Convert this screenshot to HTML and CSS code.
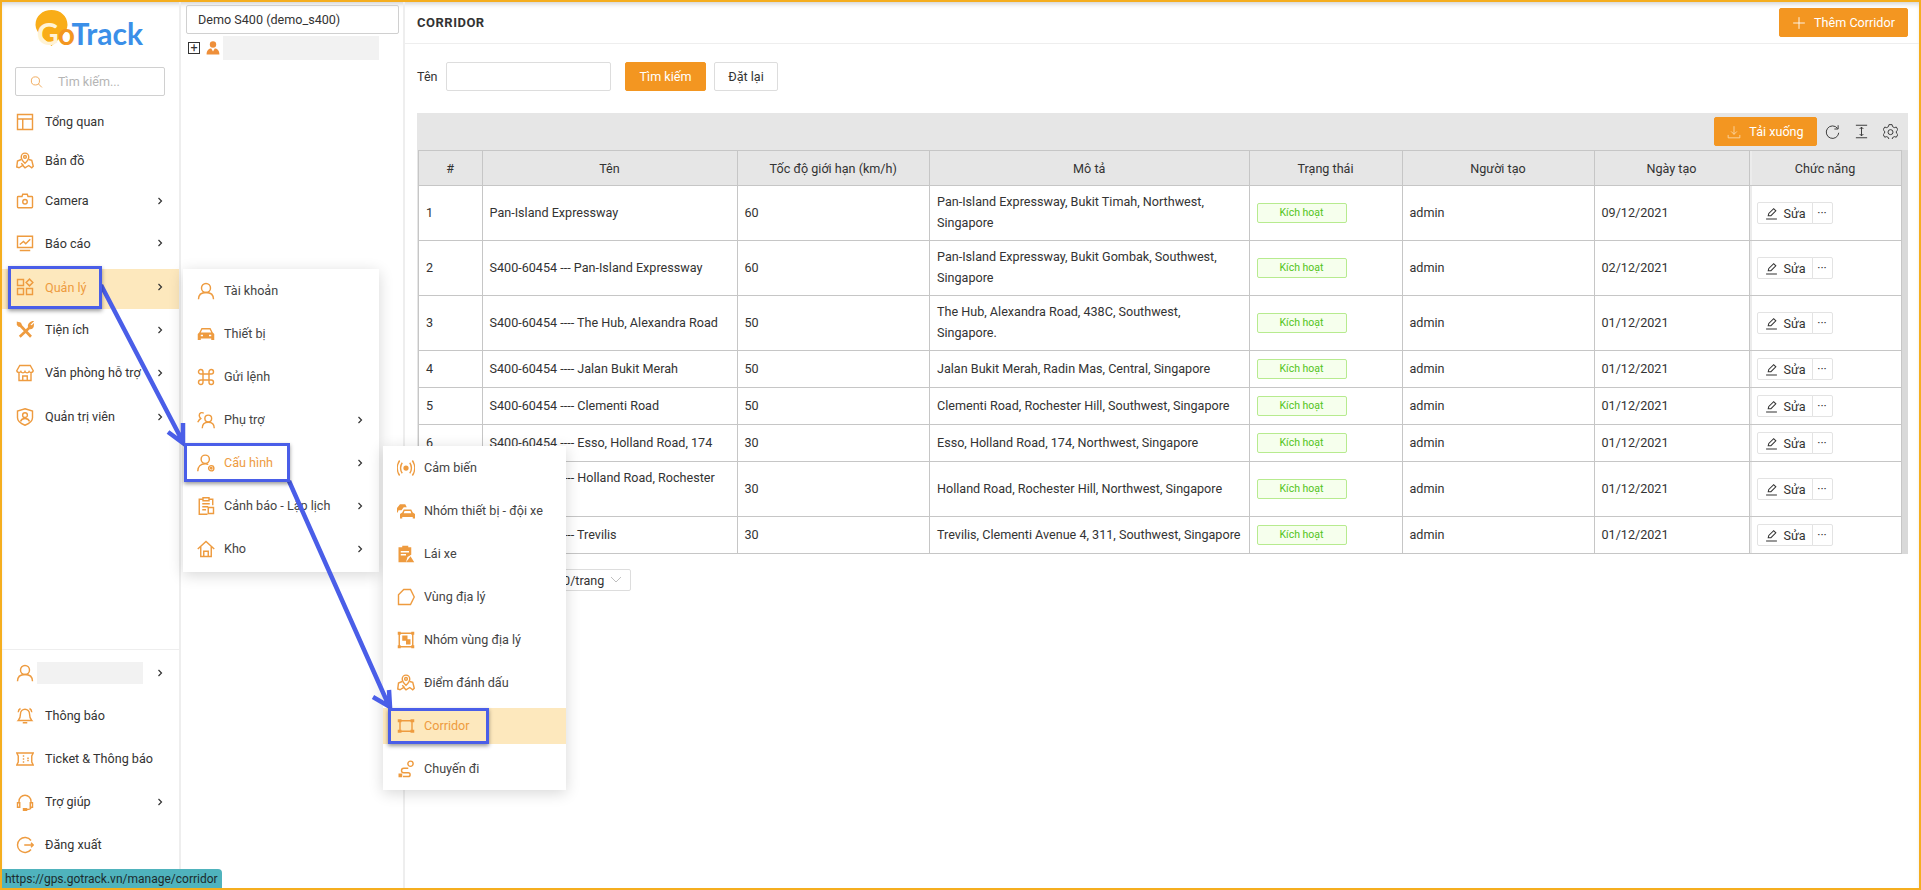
FILE: index.html
```html
<!DOCTYPE html>
<html lang="vi">

<head>
    <meta charset="UTF-8">
    <title>GoTrack - Corridor</title>
    <link rel="stylesheet" href="styles.css">
</head>

<body>
    <!-- Icon sprite -->
    <svg class="sprite" xmlns="http://www.w3.org/2000/svg">
        <symbol id="i-layout" viewBox="0 0 24 24"><path d="M2 2h20v20H2zM2 8h20M9 8v14" /></symbol>
        <symbol id="i-map" viewBox="0 0 24 24"><path d="M12 1.5a5 5 0 0 0-5 5c0 3.5 5 8.5 5 8.5s5-5 5-8.5a5 5 0 0 0-5-5z" /><circle cx="12" cy="6.5" r="1.8" /><path d="M7 10l-5 2-1 8 3 1 5-3 3 3 5-3 4 3 2-2-2-8-4-1M7 15l3 3" /></symbol>
        <symbol id="i-camera" viewBox="0 0 24 24"><path d="M3 6h5l1-3h6l1 3h5a1 1 0 0 1 1 1v13a1 1 0 0 1-1 1H3a1 1 0 0 1-1-1V7a1 1 0 0 1 1-1z" /><circle cx="12" cy="13" r="3" /></symbol>
        <symbol id="i-chart" viewBox="0 0 24 24"><path d="M2 3h20v15H2zM5 22h14M5 14l5-4 3 3 6-6" /></symbol>
        <symbol id="i-apps" viewBox="0 0 24 24"><path d="M2 2h8v8H2zM2 14h8v8H2zM14 14h8v8h-8zM18 1.5l4.5 4.5-4.5 4.5-4.5-4.5z" /></symbol>
        <symbol id="i-tools" viewBox="0 0 24 24"><path class="thick" d="M3 3l17 18M21 6L5 21" /><path d="M2 2l4 1 1 3-3 1-2-2zM22 1l-4 4v2l2 1 3-3c0 2-1 5-4 5l-2-2c-1-3 1-6 5-7z" /></symbol>
        <symbol id="i-store" viewBox="0 0 24 24"><path d="M5 2h14l4 7a3 3 0 0 1-5.5 1 3 3 0 0 1-5.5 0 3 3 0 0 1-5.5 0A3 3 0 0 1 1 9zM4 12v10h16V12M9 22v-6h6v6" /></symbol>
        <symbol id="i-shield" viewBox="0 0 24 24"><path d="M12 1l10 3v9c0 5-5 8-10 10C7 21 2 18 2 13V4z" /><circle cx="12" cy="9.5" r="3.2" /><path d="M6 18c1-3 3-4 6-4s5 1 6 4" /></symbol>
        <symbol id="i-user" viewBox="0 0 24 24"><circle cx="12" cy="8" r="6" /><path d="M2 23c0-6 4-9 10-9s10 3 10 9" /></symbol>
        <symbol id="i-car" viewBox="0 0 24 24"><path class="fill" d="M6 4h12l3 6 2 2v8h-4v-2H5v2H1v-8l2-2zM7 6l-2 4h14l-2-4zM5 13v2h3v-2zM16 13v2h3v-2z" /></symbol>
        <symbol id="i-cmd" viewBox="0 0 24 24"><path d="M8 8h8v8H8zM8 8H5a3 3 0 1 1 3-3zM16 8V5a3 3 0 1 1 3 3zM16 16h3a3 3 0 1 1-3 3zM8 16v3a3 3 0 1 1-3-3z" /></symbol>
        <symbol id="i-users" viewBox="0 0 24 24"><circle cx="15" cy="10" r="4.5" /><path d="M7 23c0-5 3-8 8-8s8 3 8 8M9 3C6 1 3 3 3 6c0 2 1 3 2 4-2 1-3 3-4 5" /></symbol>
        <symbol id="i-usergear" viewBox="0 0 24 24"><circle cx="11" cy="7" r="5.5" /><path d="M1 23c0-6 4-10 10-10 2 0 3 .4 4 1" /><circle cx="19" cy="19" r="3.5" /><circle cx="19" cy="19" r="1" /></symbol>
        <symbol id="i-clipboard" viewBox="0 0 24 24"><path d="M8 3H3v20h11M16 3h5v8M8 1h8v4H8zM7 9h10M7 13h8M7 17h5" /><path d="M15 14h7v8h-7z" /></symbol>
        <symbol id="i-home" viewBox="0 0 24 24"><path d="M1 12L12 2l11 10M5 9v13h14V9M9 22v-7h6v7" /></symbol>
        <symbol id="i-signal" viewBox="0 0 24 24"><circle class="fill" cx="12" cy="12" r="3.5" /><path d="M7 5c-3 4-3 10 0 14M17 5c3 4 3 10 0 14M3.5 2c-4 6-4 14 0 20M20.5 2c4 6 4 14 0 20" /></symbol>
        <symbol id="i-cars" viewBox="0 0 24 24"><path class="fill" d="M4 3h7l2 4H9l-3 4H2l-1 3H0V8zM9 10h10l2 4 3 2v6h-3v-2H7v2H4v-6l3-2zM10 12l-1 3h10l-1-3z" /></symbol>
        <symbol id="i-driver" viewBox="0 0 24 24"><path class="fill" d="M7 1h8v2h4v10l-5 3-2 7H2V3h5zM5 8v2h11V8zM5 12v2h7v-2zM18 15l5 8H12z" /></symbol>
        <symbol id="i-polygon" viewBox="0 0 24 24"><path d="M9 2h9l5 10-5 10H2V9z" /></symbol>
        <symbol id="i-group" viewBox="0 0 24 24"><path d="M3 3h18v18H3z" /><path class="fill" d="M1 1h4v4H1zM19 1h4v4h-4zM1 19h4v4H1zM19 19h4v4h-4zM7 6h7v7H7zM12 11h6v7h-6z" /></symbol>
        <symbol id="i-corridor" viewBox="0 0 24 24"><path d="M4 5h16M4 19h16M4 5v14M20 5v14" /><path class="fill" d="M1 3h5v4H1zM18 3h5v4h-5zM1 17h5v4H1zM18 17h5v4h-5z" /></symbol>
        <symbol id="i-route" viewBox="0 0 24 24"><circle cx="18" cy="5" r="3.5" /><path d="M15 11h-6a3 3 0 0 0 0 6h6a2.5 2.5 0 0 1 0 5H8" /><path class="fill" d="M2 18h5v5H2z" /></symbol>
        <symbol id="i-bell" viewBox="0 0 24 24"><path d="M12 3a6 6 0 0 0-6 6c0 5-1 7-3 9h18c-2-2-3-4-3-9a6 6 0 0 0-6-6zM9 21h6M3 7c0-2 1-4 3-5M21 7c0-2-1-4-3-5" /></symbol>
        <symbol id="i-ticket" viewBox="0 0 24 24"><path d="M1 4h22l-2 4v8l2 4H1l2-4V8zM10 7v2M10 11v2M10 15v2M15 11h2M15 14h2" /></symbol>
        <symbol id="i-headset" viewBox="0 0 24 24"><path d="M4 14V11a8 8 0 0 1 16 0v3M2 13h3v6H2zM19 13h3v6h-3zM20 19c0 2-3 3-6 3" /><path d="M10 21h4v2h-4z" /></symbol>
        <symbol id="i-logout" viewBox="0 0 24 24"><path d="M20 6a10 10 0 1 0 0 12M11 12h12M20 9l3 3-3 3" /></symbol>
        <symbol id="i-search" viewBox="0 0 24 24"><circle cx="10" cy="10" r="7.5" /><path d="M15.5 15.5L22 22" /></symbol>
        <symbol id="i-plus" viewBox="0 0 24 24"><path d="M12 2v20M2 12h20" /></symbol>
        <symbol id="i-download" viewBox="0 0 24 24"><path d="M12 2v14M7 11l5 5 5-5M2 17v5h20v-5" /></symbol>
        <symbol id="i-reload" viewBox="0 0 24 24"><path d="M20 7a10 10 0 1 0 2 7M21 2v6h-6" /></symbol>
        <symbol id="i-height" viewBox="0 0 24 24"><path d="M3 2h18M3 22h18M12 5v14M9 8l3-3 3 3M9 16l3 3 3-3" /></symbol>
        <symbol id="i-gear" viewBox="0 0 24 24"><path d="M9.5 1h5l.8 3.2 2.8 1.6 3.2-.9 2.5 4.3-2.4 2.3v3l2.4 2.3-2.5 4.3-3.2-.9-2.8 1.6-.8 3.2h-5l-.8-3.200-2.800-1.600-3.200.9L.2 16.800l2.400-2.300v-3L.2 9.200l2.500-4.300 3.200.9 2.800-1.600z" /><circle cx="12" cy="13" r="4" /></symbol>
        <symbol id="i-pencil" viewBox="0 0 24 24"><path d="M6 16l1-4L16 3l4 4-9 9zM2 22h20" /></symbol>
        <symbol id="i-chevron" viewBox="0 0 8 10"><path d="M2 1l4 4-4 4" /></symbol>
    </svg>

    <div class="page">
        <div class="frame">

            <!-- Left navigation -->
            <aside class="sidebar">
                <div class="logo">
                    <svg class="logo-pin" viewBox="0 0 32 36"><path d="M16 0C7 0 0 6 0 15c0 8 11 16 16 21 5-5 16-13 16-21C32 6 25 0 16 0z" /></svg>
                    <span class="logo-g">G</span><span class="logo-o">o</span><span class="logo-track">Track</span>
                </div>
                <div class="search-box">
                    <svg class="icon-sm"><use href="#i-search" /></svg>
                    <span>Tìm kiếm...</span>
                </div>

                <nav class="nav">
                    <a class="nav-item h-39" href="#"><svg class="icon"><use href="#i-layout" /></svg><span>Tổng quan</span></a>
                    <a class="nav-item h-38" href="#"><svg class="icon"><use href="#i-map" /></svg><span>Bản đồ</span></a>
                    <a class="nav-item h-41" href="#"><svg class="icon"><use href="#i-camera" /></svg><span>Camera</span><svg class="chevron"><use href="#i-chevron" /></svg></a>
                    <a class="nav-item h-44" href="#"><svg class="icon"><use href="#i-chart" /></svg><span>Báo cáo</span><svg class="chevron"><use href="#i-chevron" /></svg></a>
                    <a class="nav-item nav-active" href="#"><svg class="icon"><use href="#i-apps" /></svg><span>Quản lý</span><svg class="chevron"><use href="#i-chevron" /></svg></a>
                    <a class="nav-item h-41" href="#"><svg class="icon"><use href="#i-tools" /></svg><span>Tiện ích</span><svg class="chevron"><use href="#i-chevron" /></svg></a>
                    <a class="nav-item h-45" href="#"><svg class="icon"><use href="#i-store" /></svg><span>Văn phòng hỗ trợ</span><svg class="chevron"><use href="#i-chevron" /></svg></a>
                    <a class="nav-item" href="#"><svg class="icon"><use href="#i-shield" /></svg><span>Quản trị viên</span><svg class="chevron"><use href="#i-chevron" /></svg></a>
                </nav>

                <div class="nav nav-bottom">
                    <a class="nav-item" href="#"><svg class="icon"><use href="#i-user" /></svg><span class="blank-name"></span><svg class="chevron"><use href="#i-chevron" /></svg></a>
                    <a class="nav-item" href="#"><svg class="icon"><use href="#i-bell" /></svg><span>Thông báo</span></a>
                    <a class="nav-item" href="#"><svg class="icon"><use href="#i-ticket" /></svg><span>Ticket &amp; Thông báo</span></a>
                    <a class="nav-item" href="#"><svg class="icon"><use href="#i-headset" /></svg><span>Trợ giúp</span><svg class="chevron"><use href="#i-chevron" /></svg></a>
                    <a class="nav-item" href="#"><svg class="icon"><use href="#i-logout" /></svg><span>Đăng xuất</span></a>
                </div>
            </aside>

            <!-- Account tree -->
            <section class="tree">
                <div class="tree-select">Demo S400 (demo_s400)</div>
                <div class="tree-row">
                    <span class="tree-toggle">+</span>
                    <svg class="tree-user" viewBox="0 0 24 24"><circle cx="12" cy="6" r="5.5" /><path d="M1 23c0-7 4-10 8-10l3 5 3-5c4 0 8 3 8 10z" /></svg>
                    <span class="tree-name"></span>
                </div>
            </section>

            <!-- Main content -->
            <main class="content">
                <header class="content-header">
                    <h1>CORRIDOR</h1>
                    <button class="btn btn-primary btn-add"><svg class="icon-sm"><use href="#i-plus" /></svg>Thêm Corridor</button>
                </header>

                <div class="filter">
                    <label for="name-filter">Tên</label>
                    <input type="text" id="name-filter">
                    <button class="btn btn-primary btn-search">Tìm kiếm</button>
                    <button class="btn btn-reset">Đặt lại</button>
                </div>

                <div class="table-wrap">
                    <div class="table-toolbar">
                        <button class="btn btn-primary btn-download"><svg class="icon-sm"><use href="#i-download" /></svg>Tải xuống</button>
                        <svg class="tool-icon"><use href="#i-reload" /></svg>
                        <svg class="tool-icon"><use href="#i-height" /></svg>
                        <svg class="tool-icon"><use href="#i-gear" /></svg>
                    </div>
                    <table>
                        <colgroup>
                            <col class="col-num">
                            <col class="col-name">
                            <col class="col-speed">
                            <col class="col-desc">
                            <col class="col-status">
                            <col class="col-user">
                            <col class="col-date">
                            <col class="col-action">
                        </colgroup>
                        <thead>
                            <tr>
                                <th>#</th>
                                <th>Tên</th>
                                <th>Tốc độ giới hạn (km/h)</th>
                                <th>Mô tả</th>
                                <th>Trạng thái</th>
                                <th>Người tạo</th>
                                <th>Ngày tạo</th>
                                <th class="action-cell">Chức năng</th>
                            </tr>
                        </thead>
                        <tbody>
                            <tr>
                                <td>1</td>
                                <td>Pan-Island Expressway</td>
                                <td>60</td>
                                <td>Pan-Island Expressway, Bukit Timah, Northwest, Singapore</td>
                                <td><span class="badge">Kích hoạt</span></td>
                                <td>admin</td>
                                <td>09/12/2021</td>
                                <td class="action-cell"><span class="actions"><button class="btn-edit"><svg class="icon-xs"><use href="#i-pencil" /></svg>Sửa</button><button class="btn-more">···</button></span></td>
                            </tr>
                            <tr>
                                <td>2</td>
                                <td>S400-60454 --- Pan-Island Expressway</td>
                                <td>60</td>
                                <td>Pan-Island Expressway, Bukit Gombak, Southwest, Singapore</td>
                                <td><span class="badge">Kích hoạt</span></td>
                                <td>admin</td>
                                <td>02/12/2021</td>
                                <td class="action-cell"><span class="actions"><button class="btn-edit"><svg class="icon-xs"><use href="#i-pencil" /></svg>Sửa</button><button class="btn-more">···</button></span></td>
                            </tr>
                            <tr>
                                <td>3</td>
                                <td>S400-60454 ---- The Hub, Alexandra Road</td>
                                <td>50</td>
                                <td>The Hub, Alexandra Road, 438C, Southwest, Singapore.</td>
                                <td><span class="badge">Kích hoạt</span></td>
                                <td>admin</td>
                                <td>01/12/2021</td>
                                <td class="action-cell"><span class="actions"><button class="btn-edit"><svg class="icon-xs"><use href="#i-pencil" /></svg>Sửa</button><button class="btn-more">···</button></span></td>
                            </tr>
                            <tr>
                                <td>4</td>
                                <td>S400-60454 ---- Jalan Bukit Merah</td>
                                <td>50</td>
                                <td>Jalan Bukit Merah, Radin Mas, Central, Singapore</td>
                                <td><span class="badge">Kích hoạt</span></td>
                                <td>admin</td>
                                <td>01/12/2021</td>
                                <td class="action-cell"><span class="actions"><button class="btn-edit"><svg class="icon-xs"><use href="#i-pencil" /></svg>Sửa</button><button class="btn-more">···</button></span></td>
                            </tr>
                            <tr>
                                <td>5</td>
                                <td>S400-60454 ---- Clementi Road</td>
                                <td>50</td>
                                <td>Clementi Road, Rochester Hill, Southwest, Singapore</td>
                                <td><span class="badge">Kích hoạt</span></td>
                                <td>admin</td>
                                <td>01/12/2021</td>
                                <td class="action-cell"><span class="actions"><button class="btn-edit"><svg class="icon-xs"><use href="#i-pencil" /></svg>Sửa</button><button class="btn-more">···</button></span></td>
                            </tr>
                            <tr>
                                <td>6</td>
                                <td>S400-60454 ---- Esso, Holland Road, 174</td>
                                <td>30</td>
                                <td>Esso, Holland Road, 174, Northwest, Singapore</td>
                                <td><span class="badge">Kích hoạt</span></td>
                                <td>admin</td>
                                <td>01/12/2021</td>
                                <td class="action-cell"><span class="actions"><button class="btn-edit"><svg class="icon-xs"><use href="#i-pencil" /></svg>Sửa</button><button class="btn-more">···</button></span></td>
                            </tr>
                            <tr>
                                <td>7</td>
                                <td>S400-60454 ---- Holland Road, Rochester Hill</td>
                                <td>30</td>
                                <td>Holland Road, Rochester Hill, Northwest, Singapore</td>
                                <td><span class="badge">Kích hoạt</span></td>
                                <td>admin</td>
                                <td>01/12/2021</td>
                                <td class="action-cell"><span class="actions"><button class="btn-edit"><svg class="icon-xs"><use href="#i-pencil" /></svg>Sửa</button><button class="btn-more">···</button></span></td>
                            </tr>
                            <tr>
                                <td>8</td>
                                <td>S400-60454 ---- Trevilis</td>
                                <td>30</td>
                                <td>Trevilis, Clementi Avenue 4, 311, Southwest, Singapore</td>
                                <td><span class="badge">Kích hoạt</span></td>
                                <td>admin</td>
                                <td>01/12/2021</td>
                                <td class="action-cell"><span class="actions"><button class="btn-edit"><svg class="icon-xs"><use href="#i-pencil" /></svg>Sửa</button><button class="btn-more">···</button></span></td>
                            </tr>
                        </tbody>
                    </table>
                </div>

                <div class="pager">
                    <div class="page-size">10/trang <svg viewBox="0 0 12 8"><path d="M1 1l5 5 5-5" /></svg></div>
                </div>
            </main>
        </div>

        <!-- Fly-out menus -->
        <div class="menu menu-manage">
            <a class="menu-item" href="#"><svg class="icon"><use href="#i-user" /></svg><span>Tài khoản</span></a>
            <a class="menu-item" href="#"><svg class="icon"><use href="#i-car" /></svg><span>Thiết bị</span></a>
            <a class="menu-item" href="#"><svg class="icon"><use href="#i-cmd" /></svg><span>Gửi lệnh</span></a>
            <a class="menu-item" href="#"><svg class="icon"><use href="#i-users" /></svg><span>Phụ trợ</span><svg class="chevron"><use href="#i-chevron" /></svg></a>
            <a class="menu-item menu-open" href="#"><svg class="icon"><use href="#i-usergear" /></svg><span>Cấu hình</span><svg class="chevron"><use href="#i-chevron" /></svg></a>
            <a class="menu-item" href="#"><svg class="icon"><use href="#i-clipboard" /></svg><span>Cảnh báo - Lập lịch</span><svg class="chevron"><use href="#i-chevron" /></svg></a>
            <a class="menu-item" href="#"><svg class="icon"><use href="#i-home" /></svg><span>Kho</span><svg class="chevron"><use href="#i-chevron" /></svg></a>
        </div>

        <div class="menu menu-config">
            <a class="menu-item" href="#"><svg class="icon"><use href="#i-signal" /></svg><span>Cảm biến</span></a>
            <a class="menu-item" href="#"><svg class="icon"><use href="#i-cars" /></svg><span>Nhóm thiết bị - đội xe</span></a>
            <a class="menu-item" href="#"><svg class="icon"><use href="#i-driver" /></svg><span>Lái xe</span></a>
            <a class="menu-item" href="#"><svg class="icon"><use href="#i-polygon" /></svg><span>Vùng địa lý</span></a>
            <a class="menu-item" href="#"><svg class="icon"><use href="#i-group" /></svg><span>Nhóm vùng địa lý</span></a>
            <a class="menu-item" href="#"><svg class="icon"><use href="#i-map" /></svg><span>Điểm đánh dấu</span></a>
            <a class="menu-item menu-selected" href="#"><svg class="icon"><use href="#i-corridor" /></svg><span>Corridor</span></a>
            <a class="menu-item" href="#"><svg class="icon"><use href="#i-route" /></svg><span>Chuyến đi</span></a>
        </div>

        <!-- Tutorial annotations drawn over the screenshot -->
        <svg class="arrows" viewBox="0 0 1921 890">
            <path d="M101 285L183 442M168 432l15 11 0-20" />
            <path d="M289 481L389 706M373 697l17 10-1-17" />
        </svg>
        <div class="callout callout-manage"></div>
        <div class="callout callout-config"></div>
        <div class="callout callout-corridor"></div>

        <div class="status-url">https://gps.gotrack.vn/manage/corridor</div>
    </div>
</body>

</html>
```

FILE: styles.css
```css
/* General Styles */
* {
    box-sizing: border-box;
}

body {
    margin: 0;
    background: #ffffff;
    color: #333333;
    font-family: Roboto, "Noto Sans", sans-serif;
    font-size: 12.6px;
}

a {
    color: inherit;
    text-decoration: none;
}

.sprite {
    display: none;
}

.page {
    position: relative;
    width: 1921px;
    height: 890px;
    overflow: hidden;
}

.frame {
    display: flex;
    width: 100%;
    height: 100%;
    border: 2px solid #f5ae1f;
    box-shadow: inset 0 4px 5px -2px rgba(0, 0, 0, 0.18);
}

/* Icons */
.icon,
.icon-sm,
.icon-xs,
.tool-icon,
.chevron {
    fill: none;
    stroke: currentColor;
    stroke-width: 1.9;
    flex: none;
}

.icon {
    width: 18px;
    height: 18px;
    color: #ee9b3f;
}

.icon-sm {
    width: 14px;
    height: 14px;
    stroke-width: 1.5;
}

.icon-xs {
    width: 13px;
    height: 13px;
}

.chevron {
    width: 6px;
    height: 8px;
    margin-left: auto;
    color: #333333;
    stroke-width: 1.6;
}

symbol .fill {
    fill: currentColor;
    stroke: none;
}

symbol .thick {
    stroke-width: 3.5;
}

/* Sidebar */
.sidebar {
    width: 179px;
    flex: none;
    display: flex;
    flex-direction: column;
    border-right: 2px solid #eeeeee;
}

.logo {
    position: relative;
    height: 65px;
    padding: 13px 0 0 35px;
    font-family: Lato, sans-serif;
    font-weight: 700;
    font-size: 30px;
    line-height: 36px;
    white-space: nowrap;
}

.logo-pin {
    position: absolute;
    left: 33px;
    top: 8px;
    width: 33px;
    height: 36px;
    fill: #f9ad18;
}

.logo-g {
    position: relative;
    color: #fff3d6;
}

.logo-o {
    position: relative;
    margin-left: -1px;
    color: #f39621;
}

.logo-track {
    color: #3b8fe8;
}

.search-box {
    display: flex;
    align-items: center;
    gap: 15px;
    width: 150px;
    height: 29px;
    margin-left: 13px;
    padding-left: 14px;
    border: 1px solid #d0d0d0;
    border-radius: 2px;
    color: #b5b5b5;
}

.search-box .icon-sm {
    color: #ee9b3f;
    width: 13px;
}

.nav {
    display: flex;
    flex-direction: column;
    margin-top: 6px;
}

.nav-item {
    display: flex;
    align-items: center;
    flex: none;
    height: 43px;
    padding: 0 16px 0 14px;
    gap: 11px;
    color: #333333;
}

.h-38 {
    height: 38.5px;
}

.h-39 {
    height: 39.5px;
}

.h-41 {
    height: 41px;
}

.h-44 {
    height: 44px;
}

.h-45 {
    height: 45px;
}

.nav-active {
    height: 40px;
    margin-top: 4px;
    padding-bottom: 4px;
    background: #fde8bd;
    color: #ee9b3f;
}

.nav-bottom {
    margin-top: auto;
    margin-bottom: 22px;
    padding-top: 1px;
    border-top: 1px solid #eeeeee;
}

.blank-name {
    width: 106px;
    height: 22px;
    margin-left: -8px;
    background: #f2f2f2;
}

/* Account tree */
.tree {
    width: 224px;
    flex: none;
    padding: 3px 5px;
    border-right: 2px solid #eeeeee;
}

.tree-select {
    width: 213px;
    height: 29px;
    padding-left: 11px;
    line-height: 27px;
    border: 1px solid #d0d0d0;
    border-radius: 2px;
}

.tree-row {
    display: flex;
    align-items: center;
    height: 24px;
    margin-top: 2px;
    padding-left: 2px;
}

.tree-toggle {
    width: 12px;
    height: 12px;
    line-height: 9px;
    border: 1px solid #333333;
    text-align: center;
}

.tree-user {
    width: 14px;
    height: 14px;
    margin-left: 6px;
    fill: #ee8f3a;
}

.tree-name {
    width: 156px;
    height: 24px;
    margin-left: 3px;
    background: #f2f2f2;
}

/* Main content */
.content {
    flex: 1;
    min-width: 0;
    padding: 0 11px 0 12px;
}

.content-header {
    display: flex;
    align-items: center;
    justify-content: space-between;
    height: 42px;
    margin: 0 -11px 0 -12px;
    padding: 0 11px 0 12px;
    border-bottom: 1px solid #eeeeee;
}

h1 {
    margin: 0;
    font-size: 13px;
    font-weight: 700;
    letter-spacing: 0.5px;
    color: #333333;
}

.btn {
    height: 29px;
    border: 1px solid #dddddd;
    border-radius: 2px;
    background: #ffffff;
    color: #333333;
    font: inherit;
    padding: 0;
}

.btn-primary {
    display: inline-flex;
    align-items: center;
    justify-content: center;
    border-color: #f39621;
    background: #f39621;
    color: #ffffff;
}

.btn-add {
    width: 129px;
    gap: 8px;
}

.filter {
    display: flex;
    align-items: center;
    height: 29px;
    margin-top: 18px;
}

.filter label {
    width: 29px;
}

.filter input {
    width: 165px;
    height: 29px;
    border: 1px solid #dddddd;
    border-radius: 2px;
}

.btn-search {
    width: 81px;
    margin-left: 14px;
}

.btn-reset {
    width: 64px;
    margin-left: 8px;
}

.table-wrap {
    margin-top: 22px;
    background: linear-gradient(to right, #e6e6e6 calc(100% - 7px), #d9d9d9 calc(100% - 7px));
}

.table-toolbar {
    display: flex;
    align-items: center;
    justify-content: flex-end;
    height: 37px;
    padding-right: 10px;
    background: #e6e6e6;
}

.btn-download {
    width: 103px;
    gap: 8px;
}

.btn-download .icon-sm {
    color: #fbd9a8;
}

.tool-icon {
    width: 15px;
    height: 15px;
    margin-left: 14px;
    color: #333333;
    stroke-width: 1.5;
}

.btn-download + .tool-icon {
    margin-left: 8px;
}

table {
    table-layout: fixed;
    width: 1483px;
    margin-left: 1px;
    border-collapse: collapse;
    background: #ffffff;
}

.col-num {
    width: 63.5px;
}

.col-name {
    width: 255px;
}

.col-speed {
    width: 192.5px;
}

.col-desc {
    width: 319.5px;
}

.col-status {
    width: 153px;
}

.col-user {
    width: 192px;
}

.col-date {
    width: 155px;
}

.col-action {
    width: 152px;
}

th,
td {
    border: 1px solid #c6c6c6;
    line-height: 21px;
    color: #333333;
    font-weight: 400;
}

th {
    height: 35px;
    background: #e6e6e6;
    text-align: center;
}

td {
    height: 37px;
    padding: 5px 7px 7px;
}

.action-cell {
    box-shadow: inset 2px 0 0 #ececec;
}

.badge {
    display: block;
    width: 90px;
    height: 20px;
    margin: 1px 0 -1px;
    line-height: 18px;
    border: 1px solid #b7eb8f;
    border-radius: 2px;
    background: #f6ffed;
    color: #52c41a;
    font-size: 10.5px;
    text-align: center;
}

.actions {
    display: flex;
    margin: 1px 0 -1px;
}

.btn-edit,
.btn-more {
    height: 22px;
    border: 1px solid #e3e3e3;
    background: #ffffff;
    color: #333333;
    font: inherit;
    padding: 0;
}

.btn-edit {
    display: flex;
    align-items: center;
    gap: 6px;
    width: 56px;
    padding-left: 7px;
    border-radius: 2px 0 0 2px;
}

.btn-more {
    width: 21px;
    margin-left: -1px;
    border-radius: 0 2px 2px 0;
    font-size: 12px;
}

.pager {
    margin-top: 15px;
    padding-left: 130px;
}

.page-size {
    display: flex;
    align-items: center;
    justify-content: space-between;
    width: 84px;
    height: 22px;
    padding: 0 8px;
    border: 1px solid #dddddd;
    border-radius: 2px;
}

.page-size svg {
    width: 12px;
    height: 8px;
    fill: none;
    stroke: #bfbfbf;
}

/* Fly-out menus */
.menu {
    position: absolute;
    display: flex;
    flex-direction: column;
    background: #ffffff;
    box-shadow: 0 3px 14px rgba(0, 0, 0, 0.16);
}

.menu-manage {
    left: 183px;
    top: 269px;
    width: 196px;
    padding-bottom: 2px;
}

.menu-config {
    left: 383px;
    top: 446px;
    width: 183px;
}

.menu-item {
    display: flex;
    align-items: center;
    gap: 9px;
    height: 43px;
    padding: 0 16px 0 14px;
    color: #444444;
    flex: none;
}

.menu-open {
    color: #ee9b3f;
}

.menu-selected {
    height: 36px;
    margin: 3.5px 0;
    background: #fde8bd;
    color: #ee9b3f;
}

/* Annotations */
.arrows {
    position: absolute;
    left: 0;
    top: 0;
    width: 1921px;
    height: 890px;
    fill: none;
    stroke: #4a5ee8;
    stroke-width: 4.5;
    pointer-events: none;
}

.callout {
    position: absolute;
    border: 3.5px solid #4a5ee8;
    box-shadow: 0 2px 4px rgba(0, 0, 0, 0.4);
}

.callout-manage {
    left: 8px;
    top: 266px;
    width: 94px;
    height: 43px;
}

.callout-config {
    left: 184px;
    top: 443px;
    width: 106px;
    height: 39px;
}

.callout-corridor {
    left: 388px;
    top: 708px;
    width: 101px;
    height: 36px;
}

.status-url {
    position: absolute;
    left: 2px;
    bottom: 2px;
    width: 220px;
    height: 19px;
    padding-left: 3px;
    line-height: 20px;
    font-size: 12px;
    background: #4fb3bd;
    border-radius: 0 4px 0 0;
    color: #1c2b2e;
    white-space: nowrap;
}
```
